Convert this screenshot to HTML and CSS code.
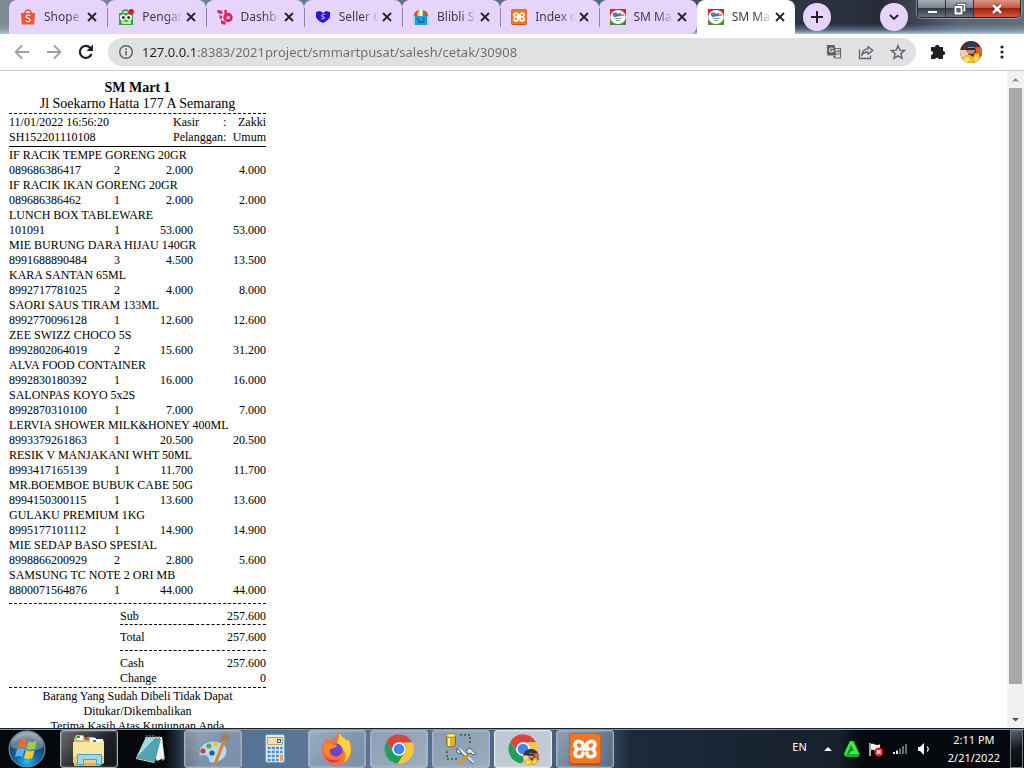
FILE: index.html
```
<!DOCTYPE html>
<html lang="id">
<head>
<meta charset="utf-8">
<title>SM Mart</title>
<link rel="stylesheet" href="styles.css">
</head>
<body>
<svg class="defs" aria-hidden="true">
  <defs>
    <symbol id="x" viewBox="0 0 10 10"><path d="M1 1l8 8M9 1L1 9" stroke="#222" stroke-width="1.800"/></symbol>
    <symbol id="smmart" viewBox="0 0 16 16"><path fill="#df1f2c" d="M0 0h16v8H0z"/><path fill="#4c8a35" d="M0 8h16v8H0z"/><ellipse cx="8" cy="8" rx="7.800" ry="7" fill="#fff"/><path d="M6.500 4.500c-4-1-4 1.500-1.500 1.500s2 2-1.500 1M7 7.500V5l1 1 1-1v2.500" fill="none" stroke="#2277b8" stroke-width="1.300"/><path d="M9.500 7l1-2 1 2M13 5v2" stroke="#dd3a3a" stroke-width="1.200" fill="none"/><path d="M4.500 9.500h7M6 11.500h4" stroke="#8aa69a"/></symbol>
    <symbol id="xampp" viewBox="0 0 32 32"><rect width="32" height="32" rx="4" fill="#b9490c"/><rect x=".5" y=".5" width="31" height="30" rx="4" fill="#ee7823"/><g fill="none" stroke="#fff" stroke-width="3.600" stroke-linejoin="round" stroke-linecap="round"><path d="M14 12.500C14.500 7.500 6 7 6 11.500c0 2.500 1 3.500 3 4.500-2 1-3 2-3 4.500 0 4.500 8.500 4.500 8-.5"/><path d="M18 12.500C17.500 7.500 26 7 26 11.500c0 2.500-1 3.500-3 4.500 2 1 3 2 3 4.500 0 4.500-8.500 4.500-8-.5"/><path d="M12 16h8M14 12.500h4"/></g></symbol>
    <symbol id="chrome" viewBox="0 0 32 32"><path fill="#db4437" d="M2.500 8.500A15.500 15.500 0 0 1 30 9H16a7 7 0 0 0-6.500 9z"/><path fill="#fcc934" d="M30 9A15.500 15.500 0 0 1 14.500 31.500L22 20a7 7 0 0 0-1-11z"/><path fill="#1da05b" d="M2.500 8.500A15.500 15.500 0 0 0 14.500 31.500L21 21a7 7 0 0 1-11-1z"/><circle cx="16" cy="16" r="7.200" fill="#fff"/><circle cx="16" cy="16" r="5.700" fill="#4084f3"/></symbol>
    <symbol id="face" viewBox="0 0 22 22"><clipPath id="round"><circle cx="11" cy="11" r="11"/></clipPath><g clip-path="url(#round)"><path fill="#572a24" d="M0 0h22v22H0z"/><path fill="#eecfbd" d="M0 9h6l3 4-5 4-4-1z"/><path fill="#d3662f" d="M15 6h7v8h-5z"/><circle cx="11" cy="9" r="4" fill="#c08b72"/><path fill="#253f66" d="M7 6l1-6h6l1 6z"/><path fill="#2d1b35" d="M7 7h8v2H7z"/><path fill="#f3bd1e" d="M1 22c0-6 4-9 9-8l3 2 2-4c4 0 7 4 7 10z"/><path fill="#ffe27a" d="M4 17l5-1 1 4-5 1zM15 15l3 1-1 4-3-1z"/></g></symbol>
  </defs>
</svg>

<header class="tabstrip">
  <div class="tabs" role="tablist">
    <div class="tab">
      <svg class="fav" viewBox="0 0 16 16"><path d="M5 4c0-4 6-4 6 0" fill="none" stroke="#ee5530" stroke-width="1.300"/><path fill="#ee5530" d="M1 4h14l-.7 11.500H1.700z"/><path d="M10.200 6.800c-2-1.600-4.400-.6-4 1 .4 1.500 4 1.200 4 3.300 0 2-3 2-4.600.6" fill="none" stroke="#fff" stroke-width="1.300"/></svg>
      <button class="tab-title" role="tab">Shope</button>
      <button class="tab-close" aria-label="Close"><svg><use href="#x"/></svg></button>
    </div>
    <div class="tab">
      <svg class="fav" viewBox="0 0 16 16"><path d="M4 4c1-4 6-4 7 0" fill="none" stroke="#528d54" stroke-width="1.300"/><path fill="#36a445" d="M1 4h14v12H1z"/><path fill="#c2e7a8" d="M3 11l5 2 5-2v4H4z"/><circle cx="5" cy="8.500" r="3" fill="#fff"/><circle cx="11" cy="8.500" r="3" fill="#fff"/><circle cx="5.300" cy="8.500" r="1.500" fill="#253b2a"/><circle cx="10.700" cy="8.500" r="1.500" fill="#253b2a"/><path fill="#efac31" d="M7 10h2l-1 2.500z"/><circle cx="13.300" cy="2.700" r="2.700" fill="#f11320"/></svg>
      <button class="tab-title" role="tab">Pengat</button>
      <button class="tab-close" aria-label="Close"><svg><use href="#x"/></svg></button>
    </div>
    <div class="tab">
      <svg class="fav" viewBox="0 0 16 16"><path d="M0 1l5 .5.500 3.500L1 4.500zM2.500 6l3 1-1 3-2-.5z" fill="#df2461"/><path d="M8.500 1l.5 7" stroke="#df2461" stroke-width="2.600" fill="none"/><circle cx="11" cy="8.500" r="3.300" fill="none" stroke="#df2461" stroke-width="2.900"/><path d="M4 11l5 2-1 3-4-1.500z" fill="#df2461"/></svg>
      <button class="tab-title" role="tab">Dashb</button>
      <button class="tab-close" aria-label="Close"><svg><use href="#x"/></svg></button>
    </div>
    <div class="tab">
      <svg class="fav" viewBox="0 0 16 16"><path fill="#2715d9" d="M1 3l4-1 3 2 3-2 4 1v5.500l-3.500 3.500-3.500 2-4-2L1 8.500z"/><path d="M10 5.500c-3-1-4.500 1.500-2 2.200s1.500 3-1.800 1.800" fill="none" stroke="#c9b9f5" stroke-width="1.100"/></svg>
      <button class="tab-title" role="tab">Seller C</button>
      <button class="tab-close" aria-label="Close"><svg><use href="#x"/></svg></button>
    </div>
    <div class="tab">
      <svg class="fav" viewBox="0 0 16 16"><path fill="#9fe0ef" d="M0 5h16v11H0z"/><path fill="#1e9fdc" d="M2 6h12v10H2z"/><path fill="#e94232" d="M1 7c0-4 3-6 7-6s7 2 7 6z"/><path fill="#f8c829" d="M4 7c0-3 1-5 3-6v6z"/><path fill="#45a848" d="M9 1c2 1 3 3 3 6H9z"/><path fill="#fff" d="M6.500 1h3v6h-3z"/><path d="M5 9v2M11 9v2M5 12c2 2 4 2 6 0" stroke="#0c5785" fill="none" stroke-width="1.200"/></svg>
      <button class="tab-title" role="tab">Blibli S</button>
      <button class="tab-close" aria-label="Close"><svg><use href="#x"/></svg></button>
    </div>
    <div class="tab">
      <svg class="fav"><use href="#xampp"/></svg>
      <button class="tab-title" role="tab">Index o</button>
      <button class="tab-close" aria-label="Close"><svg><use href="#x"/></svg></button>
    </div>
    <div class="tab">
      <svg class="fav"><use href="#smmart"/></svg>
      <button class="tab-title" role="tab">SM Ma</button>
      <button class="tab-close" aria-label="Close"><svg><use href="#x"/></svg></button>
    </div>
    <div class="tab active">
      <svg class="fav"><use href="#smmart"/></svg>
      <button class="tab-title" role="tab" aria-selected="true">SM Ma</button>
      <button class="tab-close" aria-label="Close"><svg><use href="#x"/></svg></button>
    </div>
  </div>
  <button class="circle" aria-label="New tab"><svg viewBox="0 0 14 14"><path d="M7 1v12M1 7h12" stroke="#202124" stroke-width="2"/></svg></button>
  <button class="circle search" aria-label="Search tabs"><svg viewBox="0 0 14 14"><path d="M3 5l4 4 4-4" fill="none" stroke="#202124" stroke-width="1.800"/></svg></button>
  <div class="window-buttons">
    <button class="win" aria-label="Minimize"><svg viewBox="0 0 14 14"><rect x="2.500" y="8.500" width="10" height="3" fill="#fff" stroke="#4b515b"/></svg></button>
    <button class="win" aria-label="Restore"><svg viewBox="0 0 14 14"><g fill="none" stroke="#4b515b" stroke-width="3.400"><path d="M5 2.500h6.500v6H5z"/></g><path d="M5 2.500h6.500v6H5z" fill="none" stroke="#fff" stroke-width="1.500"/><path d="M2.500 5h6v6.500h-6z" fill="#5a6270" stroke="#4b515b" stroke-width="3.400"/><path d="M2.500 5h6v6.500h-6z" fill="#5a6270" stroke="#fff" stroke-width="1.800"/></svg></button>
    <button class="win close" aria-label="Close window"><svg viewBox="0 0 14 14"><path d="M3 3l8 8M11 3l-8 8" stroke="#5c2a28" stroke-width="4.500"/><path d="M3 3l8 8M11 3l-8 8" stroke="#fff" stroke-width="2.600"/></svg></button>
  </div>
</header>

<nav class="toolbar">
  <button class="tool" aria-label="Back"><svg viewBox="0 0 20 20"><path d="M17 10H4M10 3.500L3.500 10l6.500 6.500" fill="none" stroke="#a0a0a3" stroke-width="1.800"/></svg></button>
  <button class="tool" aria-label="Forward"><svg viewBox="0 0 20 20"><path d="M3 10h13M10 3.500l6.500 6.500-6.500 6.500" fill="none" stroke="#a0a0a3" stroke-width="1.800"/></svg></button>
  <button class="tool" aria-label="Reload"><svg viewBox="0 0 20 20"><path d="M15.500 12a6 6 0 1 1-1.200-6.200l1.200 1.500" fill="none" stroke="#202124" stroke-width="2.200"/><path d="M17 2.500V9h-6.500z" fill="#202124"/></svg></button>
  <div class="omnibox">
    <svg class="info" viewBox="0 0 16 16"><circle cx="8" cy="8" r="6.300" fill="none" stroke="#5f6368" stroke-width="1.500"/><path d="M8 7v4.500M8 4.300v1.600" stroke="#5f6368" stroke-width="1.600"/></svg>
    <input class="url" type="text" aria-label="Address" value="127.0.0.1:8383/2021project/smmartpusat/salesh/cetak/30908">
    <button class="mini" aria-label="Translate"><svg viewBox="0 0 16 16"><path d="M6.500 4.500h8v9.500h-6" fill="none" stroke="#67696d" stroke-width="1.200"/><path fill="#5f6368" d="M1 1h7.500l2 10.500H2a1 1 0 0 1-1-1zM7 12h3l-2 2.500z"/><path d="M7 4.800a2 2 0 1 0 .3 2H5.500" fill="none" stroke="#e1e1e3" stroke-width="1.100"/><path d="M10 7h4M12 6v1M13.300 7c-.3 2-1.500 3-2.500 4M11 8.500l2.500 2.500" stroke="#67696d" stroke-width=".9" fill="none"/></svg></button>
    <button class="mini" aria-label="Share"><svg viewBox="0 0 16 16"><path d="M1.500 5.500v9h11v-3" fill="none" stroke="#5f6368" stroke-width="1.300"/><path d="M10 2.500L14.800 6.500 10 10.300V8C7 8 5 9 3.700 11.500 4 7.500 6.300 5 10 4.800z" fill="none" stroke="#5f6368" stroke-width="1.300" stroke-linejoin="round"/></svg></button>
    <button class="mini" aria-label="Bookmark"><svg viewBox="0 0 16 16"><path d="M8 1.700l1.800 4.400 4.700.4-3.600 3.100 1.100 4.600L8 11.800l-4 2.400 1.100-4.600-3.600-3.100 4.700-.4z" fill="none" stroke="#5f6368" stroke-width="1.400"/></svg></button>
  </div>
  <button class="tool" aria-label="Extensions"><svg viewBox="0 0 20 20"><path fill="#202124" d="M3 5h4a2 2 0 1 1 4.500 0H15v4a2.100 2.100 0 1 1 0 4.300v3.700h-4.200a1.900 1.900 0 0 0-3.600 0H3v-4a2 2 0 0 0 0-4z"/></svg></button>
  <button class="tool avatar" aria-label="Profile"><svg><use href="#face"/></svg></button>
  <button class="tool menu" aria-label="Menu"><svg viewBox="0 0 16 16"><g fill="#202124"><circle cx="8" cy="3" r="1.600"/><circle cx="8" cy="8" r="1.600"/><circle cx="8" cy="13" r="1.600"/></g></svg></button>
</nav>

<div class="viewport">
  <main class="page">
    <article class="receipt">
      <h1 class="store">SM Mart 1</h1>
      <p class="address">Jl Soekarno Hatta 177 A Semarang</p>
      <table class="meta">
        <tr><td class="doc">11/01/2022 16:56:20</td><td class="label">Kasir</td><td class="colon">:</td><td class="num">Zakki</td></tr>
        <tr><td class="doc">SH152201110108</td><td class="label">Pelanggan</td><td class="colon">:</td><td class="num">Umum</td></tr>
      </table>
      <table class="items">
        <colgroup><col class="c-code"><col class="c-qty"><col class="c-price"><col class="c-total"></colgroup>
        <tbody>
        <tr><td colspan="4">IF RACIK TEMPE GORENG 20GR</td></tr><tr><td>089686386417</td><td class="qty">2</td><td class="num">2.000</td><td class="num">4.000</td></tr>
        <tr><td colspan="4">IF RACIK IKAN GORENG 20GR</td></tr><tr><td>089686386462</td><td class="qty">1</td><td class="num">2.000</td><td class="num">2.000</td></tr>
        <tr><td colspan="4">LUNCH BOX TABLEWARE</td></tr><tr><td>101091</td><td class="qty">1</td><td class="num">53.000</td><td class="num">53.000</td></tr>
        <tr><td colspan="4">MIE BURUNG DARA HIJAU 140GR</td></tr><tr><td>8991688890484</td><td class="qty">3</td><td class="num">4.500</td><td class="num">13.500</td></tr>
        <tr><td colspan="4">KARA SANTAN 65ML</td></tr><tr><td>8992717781025</td><td class="qty">2</td><td class="num">4.000</td><td class="num">8.000</td></tr>
        <tr><td colspan="4">SAORI SAUS TIRAM 133ML</td></tr><tr><td>8992770096128</td><td class="qty">1</td><td class="num">12.600</td><td class="num">12.600</td></tr>
        <tr><td colspan="4">ZEE SWIZZ CHOCO 5S</td></tr><tr><td>8992802064019</td><td class="qty">2</td><td class="num">15.600</td><td class="num">31.200</td></tr>
        <tr><td colspan="4">ALVA FOOD CONTAINER</td></tr><tr><td>8992830180392</td><td class="qty">1</td><td class="num">16.000</td><td class="num">16.000</td></tr>
        <tr><td colspan="4">SALONPAS KOYO 5x2S</td></tr><tr><td>8992870310100</td><td class="qty">1</td><td class="num">7.000</td><td class="num">7.000</td></tr>
        <tr><td colspan="4">LERVIA SHOWER MILK&amp;HONEY 400ML</td></tr><tr><td>8993379261863</td><td class="qty">1</td><td class="num">20.500</td><td class="num">20.500</td></tr>
        <tr><td colspan="4">RESIK V MANJAKANI WHT 50ML</td></tr><tr><td>8993417165139</td><td class="qty">1</td><td class="num">11.700</td><td class="num">11.700</td></tr>
        <tr><td colspan="4">MR.BOEMBOE BUBUK CABE 50G</td></tr><tr><td>8994150300115</td><td class="qty">1</td><td class="num">13.600</td><td class="num">13.600</td></tr>
        <tr><td colspan="4">GULAKU PREMIUM 1KG</td></tr><tr><td>8995177101112</td><td class="qty">1</td><td class="num">14.900</td><td class="num">14.900</td></tr>
        <tr><td colspan="4">MIE SEDAP BASO SPESIAL</td></tr><tr><td>8998866200929</td><td class="qty">2</td><td class="num">2.800</td><td class="num">5.600</td></tr>
        <tr><td colspan="4">SAMSUNG TC NOTE 2 ORI MB</td></tr><tr><td>8800071564876</td><td class="qty">1</td><td class="num">44.000</td><td class="num">44.000</td></tr>
        </tbody>
      </table>
      <div class="totals-wrap">
        <table class="totals">
          <tr class="sub"><td>Sub</td><td class="num">257.600</td></tr>
          <tr class="total"><td>Total</td><td class="num">257.600</td></tr>
          <tr class="cash"><td>Cash</td><td class="num">257.600</td></tr>
          <tr><td>Change</td><td class="num">0</td></tr>
        </table>
      </div>
      <p class="note">Barang Yang Sudah Dibeli Tidak Dapat Ditukar/Dikembalikan<br>Terima Kasih Atas Kunjungan Anda</p>
    </article>
  </main>
  <div class="scrollbar" aria-hidden="true">
    <svg viewBox="0 0 17 17"><path d="M5 10.500h7L8.500 7z" fill="#909090"/></svg>
    <div class="thumb"></div>
    <svg viewBox="0 0 17 17"><path d="M5 7h7l-3.500 3.500z" fill="#505050"/></svg>
  </div>
</div>

<footer class="taskbar">
  <button class="start" aria-label="Start"><svg viewBox="0 0 38 38"><defs><radialGradient id="orb" cx=".5" cy=".85" r=".85"><stop offset="0" stop-color="#18c4f4"/><stop offset=".35" stop-color="#1267a8"/><stop offset=".7" stop-color="#1e4969"/><stop offset="1" stop-color="#9db4c0"/></radialGradient></defs><circle cx="19" cy="19" r="18" fill="url(#orb)" stroke="#7f97a5"/><path d="M3 17a16 14 0 0 1 32 0c-9 5-21 5-32 0z" fill="#fff" opacity=".3"/><path fill="#ef6a2b" d="M12 10c3-2 5-1.500 7 0l-2 8c-3-2-5-1.500-7.500 0z"/><path fill="#a3ce3c" d="M20.500 11c3 1.500 5 1.300 8.500-.5l-2 8c-3 1.500-5.500 1.500-8.500 0z"/><path fill="#57b3e8" d="M9 19.500c3-1.500 5-1.500 7.500 0L14.500 27c-2-1.500-4.500-1.500-7.500 0z"/><path fill="#fcc92e" d="M18 20c3 1.700 5.500 1.500 8.500 0l-2 8c-3 1.500-5.500 1.500-8.500-.3z"/></svg></button>
  <div class="apps">
    <button class="app open dark" aria-label="Explorer"><svg viewBox="0 0 36 34"><path fill="#d8b660" d="M3 7l2-4h7l2 3 4-1h5l2 3 6-1 2 2v22l-4 3H3z"/><path fill="#fff" d="M6 4h6v4H6zM19 6h6v4h-6zM25 7h7v4h-7z"/><path fill="#2e9b47" d="M6 4h3v2H6z"/><path fill="#d54638" d="M14 6h4v2h-4z"/><path fill="#3b80c5" d="M22 8h3v2h-3z"/><path fill="#f8e7a0" d="M2 10h31v21H2z"/><path fill="#edcf76" d="M2 24h31v7H2z"/><path d="M6.500 32.500V22.500h24v10h-5v-5h-13v5z" fill="#9dd7f0" stroke="#4b9cc8"/></svg></button>
    <button class="app" aria-label="Notepad"><svg viewBox="0 0 36 34"><path fill="#b99d62" d="M29 6l3 21-3 2z"/><path fill="#f1f4f4" d="M12 5h17l2 21-7 3z"/><path fill="#4fa3b5" d="M13 5l15 2-6 23L3 26z"/><path fill="#a4d8df" d="M13 5l9 1L5 24l-2 2z"/><path fill="#d4dcde" d="M3 26l19 4-1 1-18-4z"/><path d="M14 3v3M17 3v3M20 3v3M23 4v3M26 4v3" stroke="#7c858b" stroke-width="1.300"/></svg></button>
    <button class="app open" aria-label="Paint"><svg viewBox="0 0 36 34"><path fill="#b7daed" stroke="#6b98b8" d="M4 22c-1-7 6-13 14-13s14 4 14 10c0 7-8 12-15 12-5 0-2-6-6-7-3-1-5 1-7-2z"/><circle cx="14" cy="14" r="2.600" fill="#5cab42"/><circle cx="8" cy="19" r="2.600" fill="#d63a32"/><circle cx="21" cy="12" r="2.600" fill="#f3c52e"/><circle cx="17" cy="21" r="2.600" fill="#2f5a7c"/><path d="M29 9L20 32" stroke="#e0822c" stroke-width="3"/><path fill="#a98056" d="M27 9c-3-3 0-7 4-8l1 2 3 1c0 4-3 7-7 5z"/></svg></button>
    <button class="app" aria-label="Calculator"><svg viewBox="0 0 36 34"><rect x="8.500" y="2.500" width="19" height="28" rx="2" fill="#dcebf6" stroke="#6ea4cc"/><path fill="#f4e0b0" stroke="#c59d52" d="M10.500 5.500h15v7h-15z"/><path d="M20.500 7.500h3v3h-3z" fill="none" stroke="#34548a"/><g stroke="#508dc5" stroke-width="2.400" stroke-dasharray="3 1.200"><path d="M10.500 16h15M10.500 20h15M10.500 24h15M10.500 28h11"/></g><path fill="#eba83e" d="M23 23h3v6h-3z"/></svg></button>
    <button class="app open" aria-label="Firefox"><svg viewBox="0 0 36 34"><path fill="#ff7139" d="M3 19C3 12 6 8 9 5l1 4c2-1 4-2 6-2 0-2 3-5 5-6 1 4 5 5 7 8l1-2c8 12 2 26-11 26C10 33 3 27 3 19z"/><path fill="#e32b6b" d="M4 21c2 6 10 9 17 6-4 5-13 6-17-6z"/><path fill="#ffd43b" d="M21 1c1 4 5 5 7 8l1-2c6 10 2 20-5 24 6-7 1-16-6-17 1-5 1-9 3-13z"/><circle cx="17" cy="18" r="6.500" fill="#6a45cc"/><path fill="#ff8a25" d="M6 12c5-2 8 0 12 1-1 4-6 3-8 5-1 3 1 6 5 7-8 1-11-7-9-13z"/></svg></button>
    <button class="app open bright" aria-label="Chrome"><svg class="mid"><use href="#chrome"/></svg></button>
    <button class="app open bright" aria-label="Database tools"><svg viewBox="0 0 36 34"><path fill="#e4b21f" stroke="#8f6b13" d="M3.500 3.500v10c2 2 7 2 9 0v-10z"/><ellipse cx="8" cy="3.500" rx="4.500" ry="2" fill="#fae98a" stroke="#a88420"/><path fill="#fff0a0" d="M5 6h2v8H5z"/><path d="M17 3h10v10M4 19v8h12" fill="none" stroke="#23863b" stroke-width="2" stroke-dasharray="2 2"/><path d="M16 17l14 14" stroke="#f1f4f7" stroke-width="3"/><path d="M17 20l13 12" stroke="#4778bb" stroke-width="1.500"/><path d="M16 32l11-11" stroke="#d9942f" stroke-width="3.500"/><path fill="#d8e0e8" stroke="#536373" d="M23 18l4-2 6 6-3 1-2-2-3 1zM13 17l4 1 1 4-4-1z"/></svg></button>
    <button class="app open bright active-app" aria-label="Chrome profile window"><svg viewBox="0 0 36 34"><use href="#chrome" x="3" y="2" width="30" height="30"/><use href="#face" x="18" y="17" width="16" height="16"/></svg></button>
    <button class="app open" aria-label="XAMPP"><svg viewBox="0 0 36 34"><use href="#xampp" x="2" y="1" width="32" height="32"/></svg></button>
  </div>
  <div class="tray">
    <span class="lang">EN</span>
    <svg viewBox="0 0 16 16"><path d="M4 10h8L8 6z" fill="#fff"/></svg>
    <svg viewBox="0 0 16 16"><path fill="#128a22" d="M6 0h4l6 13-1 3H1l-1-3z"/><path fill="#3fea48" d="M6 0h3l6 13H5l2-3h3L7 4 2 15l-2-2z"/><path fill="#17b32b" d="M2 13h13l-1 3H2z"/></svg>
    <svg viewBox="0 0 16 16"><path d="M2 2v13" stroke="#fff" stroke-width="1.300"/><path fill="#f3f3f3" d="M3 3c3-1 4 1 6 1l3-.5V10c-4 1-6-2-9-1z"/><circle cx="10.800" cy="11" r="4.500" fill="#d9252b"/><path d="M9 9.200l3.600 3.600M12.600 9.200L9 12.800" stroke="#fff" stroke-width="1.500"/></svg>
    <svg viewBox="0 0 16 16"><path fill="#e8eaec" d="M1 11h2v2H1zM4 9.500h2V13H4z"/><path fill="#646b72" d="M7 7.500h2V13H7zM10 5h2v8h-2zM13 3h2v10h-2z"/></svg>
    <svg viewBox="0 0 16 16"><path fill="#fff" d="M2 6h2l4-4v12l-4-4H2z"/><path d="M11 5.500c1.500 1.500 1.500 3.500 0 5" fill="none" stroke="#d8dce0" stroke-width="1.300"/></svg>
    <time class="clock">2:11 PM<br>2/21/2022</time>
    <button class="show-desktop" aria-label="Show desktop"></button>
  </div>
</footer>
</body>
</html>
```

FILE: styles.css
```
* { box-sizing: border-box; }
body {
  margin: 0;
  height: 100vh;
  display: flex;
  flex-direction: column;
  overflow: hidden;
  background: #fff;
  font-family: "Noto Sans", "Open Sans", sans-serif;
}
button { border: 0; padding: 0; background: none; font: inherit; color: inherit; }
svg { display: block; }
.defs { position: absolute; width: 0; height: 0; }

/* Tab strip */
.tabstrip {
  flex: none;
  display: flex;
  align-items: center;
  height: 34px;
  padding: 0 3px 0 9px;
  background:
    linear-gradient(to bottom, transparent 24px, #a3bcd866 30px, #a9c5e5 34px),
    linear-gradient(to right, #7e8a90 0, #5f7f98 300px, #52687c 600px, #303748 780px, #272b38 880px, #5a6472 960px, #646e7a 100%);
}
.tabs { flex: 0 1 786px; min-width: 0; display: flex; height: 34px; }
.tab {
  flex: 1 1 0;
  min-width: 0;
  display: flex;
  align-items: center;
  padding: 0 7px 0 11px;
  background: #e7d4fd;
  border-radius: 8px 8px 0 0;
  color: #3f3a49;
}
.tab + .tab { background: linear-gradient(#8d839b, #8d839b) 0 8px / 1px 19px no-repeat #e7d4fd; }
.tab:nth-child(7) { border-radius: 8px 8px 8px 0; }
.tab.tab.active { background: #fff; }
.fav { flex: none; width: 16px; height: 16px; margin-right: 8px; }
.tab-title {
  flex: 1;
  min-width: 0;
  overflow: hidden;
  white-space: nowrap;
  text-align: left;
  font-size: 12px;
  line-height: 16px;
  -webkit-mask-image: linear-gradient(to right, #000 60%, transparent);
  mask-image: linear-gradient(to right, #000 60%, transparent);
}
.tab-close { flex: none; padding: 3px; }
.tab-close svg { width: 10px; height: 10px; }
.circle {
  flex: none;
  display: grid;
  place-items: center;
  width: 28px;
  height: 28px;
  margin-left: 8px;
  border-radius: 50%;
  background: #e7d4fd;
}
.circle svg { width: 14px; height: 14px; }
.search { margin-left: auto; margin-right: 9px; }
.window-buttons {
  flex: none;
  align-self: flex-start;
  display: flex;
  height: 18px;
  border: 1px solid #20252d;
  border-top: 0;
  border-radius: 0 0 5px 5px;
  box-shadow: 0 0 0 1px #c2c8d088;
  overflow: hidden;
}
.win {
  flex: none;
  display: grid;
  place-items: center;
  width: 28px;
  background: linear-gradient(#aab0b8, #7b828c 45%, #343b46 50%, #687280);
  border-right: 1px solid #2e343e;
}
.win svg { width: 14px; height: 14px; }
.win.close { width: 46px; border: 0; background: linear-gradient(#dc9384, #c55a46 45%, #a31f0d 50%, #d4583a); }

/* Toolbar */
.toolbar {
  flex: none;
  display: flex;
  align-items: center;
  gap: 12px;
  height: 37px;
  padding: 0 14px 0 12px;
  border-bottom: 1px solid #c8c8c8;
}
.tool { flex: none; width: 20px; height: 20px; }
.tool svg { width: 100%; height: 100%; }
.avatar { width: 22px; height: 22px; }
.menu { width: 16px; height: 16px; }
.omnibox {
  flex: 1;
  display: flex;
  align-items: center;
  gap: 16px;
  height: 28px;
  padding: 0 10px;
  border-radius: 14px;
  background: #e1e1e3;
}
.info { flex: none; width: 16px; height: 16px; }
.url {
  flex: 1;
  min-width: 0;
  margin-left: -8px;
  padding: 0;
  border: 0;
  outline: 0;
  font: 13px/20px "Noto Sans", "Open Sans", sans-serif;
  background: linear-gradient(to right, #202124 56px, #6a6c70 56px) text;
  -webkit-background-clip: text;
  -webkit-text-fill-color: transparent;
}
.mini { flex: none; width: 16px; height: 16px; }

/* Page */
.viewport { flex: 1; min-height: 0; display: flex; }
.page {
  flex: 1;
  min-width: 0;
  overflow: hidden;
  padding: 8px 9px;
  font: 12px/15px "Liberation Serif", "Times New Roman", serif;
  color: #000;
}
.receipt { width: 257px; }
.store, .address { margin: 0; text-align: center; font-size: 14px; line-height: 17px; }
.address { font-weight: 400; line-height: 16px; padding-bottom: 1px; border-bottom: 1px dashed #000; }
table { width: 100%; border-collapse: collapse; }
td { padding: 0; white-space: nowrap; }
.num { text-align: right; }
.meta { table-layout: fixed; border-bottom: 1px solid #000; }
.meta tr:first-child td { padding-top: 1px; }
.meta tr:last-child td { padding-bottom: 1px; }
.doc { width: 164px; }
.label { width: 50px; }
.colon { width: 4px; }
.items { table-layout: fixed; margin-top: 1px; }
.items tr:last-child td { padding-bottom: 5px; }
.c-code { width: 93px; }
.c-qty { width: 30px; }
.c-price { width: 61px; }
.c-total { width: 73px; }
.qty { text-align: center; }
.totals-wrap { padding: 5px 0 1px 111px; border-top: 1px dashed #000; border-bottom: 1px dashed #000; }
.sub, .total { border-bottom: 1px dashed #000; }
.total td { padding: 5px 0; }
.cash td { padding-top: 5px; }
.note { margin: 0; padding: 1px 16px 0; text-align: center; }

.scrollbar { flex: none; display: flex; flex-direction: column; width: 17px; background: #f1f1f1; }
.scrollbar svg { flex: none; width: 17px; height: 17px; }
.thumb { flex: 0 1 596px; width: 13px; margin: 0 2px; background: #a8a8a8; }
.scrollbar svg:last-child { margin-top: auto; }

/* Taskbar */
.taskbar {
  flex: none;
  display: flex;
  align-items: center;
  height: 40px;
  padding: 0 1px 0 8px;
  border-top: 1px solid #1a222b;
  box-shadow: inset 0 1px #8794a2;
  color: #fff;
  background: linear-gradient(to right, #06080b 0, #06080b 165px, #52708f 200px, #5b7899 320px, #4e6b8a 480px, #40597a 600px, #1c2a3c 630px, #17202b 840px, #06090d 860px);
}
.start { flex: none; width: 38px; height: 38px; }
.start svg { width: 38px; height: 38px; }
.apps { display: flex; gap: 4px; margin-left: 14px; }
.app {
  display: grid;
  place-items: center;
  width: 58px;
  height: 38px;
  border: 1px solid transparent;
  border-radius: 3px;
}
.app svg { width: 36px; height: 34px; }
.app .mid { width: 30px; height: 30px; }
.app.open { border-color: #a6b1bd; background: linear-gradient(135deg, #ffffff66, #ffffff40 50%, #ffffff33); box-shadow: inset 0 0 2px #ffffff88; }
.app.dark { background: linear-gradient(135deg, #ffffff66, #ffffff1a 60%, #ffffff0d); }
.app.bright { background: linear-gradient(135deg, #ffffff50, #ffffff70); }
.app.active-app { border-color: #e3e9ef; background: linear-gradient(135deg, #ffffffa0, #ffffffb0); }
.tray { display: flex; align-items: center; gap: 8px; height: 100%; margin-left: auto; font-size: 11px; line-height: 18px; }
.tray svg { flex: none; width: 16px; height: 16px; }
.lang { margin: 0 5px 4px 0; }
.clock { margin: 0 2px 0 8px; text-align: center; }
.show-desktop { width: 13px; height: 38px; border: 1px solid #6c747d; background: linear-gradient(160deg, #59626b, #12171d 50%, #05080b); }
```
